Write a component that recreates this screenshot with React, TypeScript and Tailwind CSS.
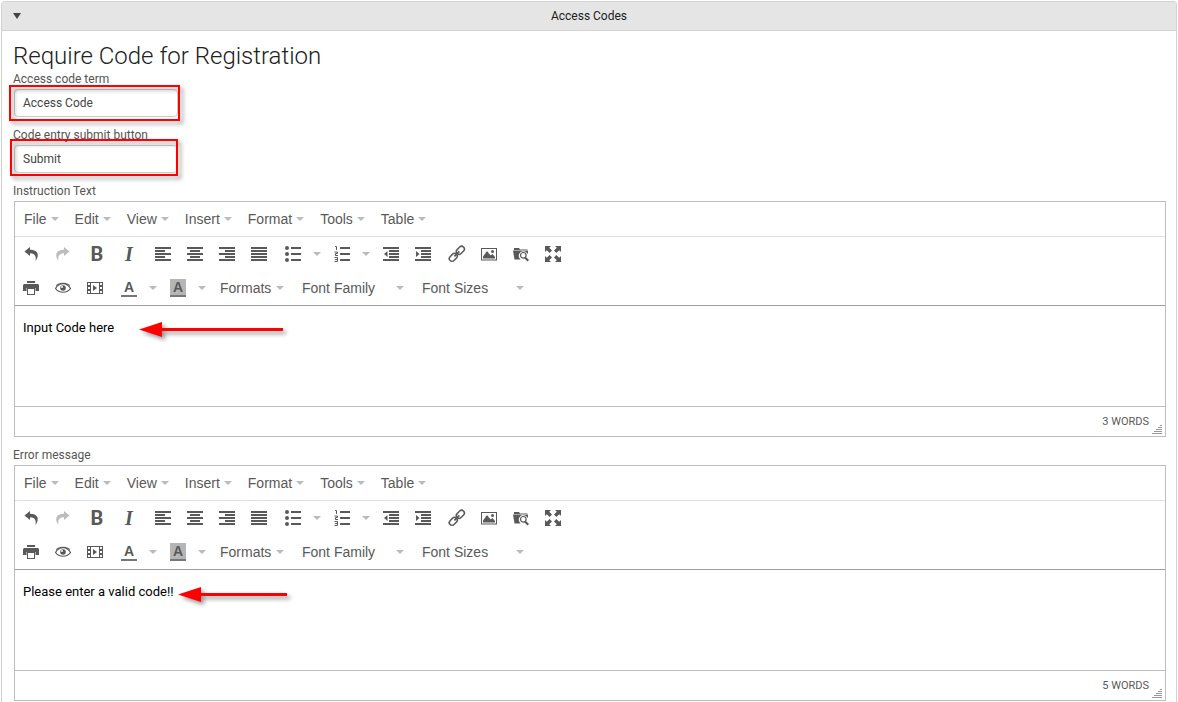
import type React from 'react';

const MENUS = ['File', 'Edit', 'View', 'Insert', 'Format', 'Tools', 'Table'];

export default function App() {
  return (
    <main className="mx-px mt-px rounded-t-sm border border-b-0 border-[#d3d3d3] bg-white font-['Roboto',sans-serif] text-xs">
      <header className="grid h-[29px] grid-cols-[1fr_auto_1fr] items-center border-b border-[#d3d3d3] bg-[#e5e5e5] text-[#212121]">
        <button type="button" aria-label="Collapse" className="ml-[11px] w-2">
          <svg viewBox="0 0 8 6" className="h-1.5 w-2" fill="#444">
            <path d="M0 0h8L4 6z" />
          </svg>
        </button>
        <h1>Access Codes</h1>
      </header>

      <form className="pt-2.5 pr-2.5 pb-px pl-[11px]">
        <h2 className="text-2xl leading-[30px] font-light text-[#212121]">Require Code for Registration</h2>
        <TextField id="term" label="Access code term" value="Access Code">
          <span className="pointer-events-none absolute -top-1 -left-[5px] h-9 w-[171px] border-2 border-[#f00] drop-shadow-[3px_3px_2px_rgba(0,0,0,0.4)]" />
        </TextField>
        <TextField id="submit" label="Code entry submit button" value="Submit">
          <span className="pointer-events-none absolute -top-1.5 -left-1 h-[37px] w-[168px] border-2 border-[#f00] drop-shadow-[3px_3px_2px_rgba(0,0,0,0.4)]" />
        </TextField>
        <EditorField id="instruction" label="Instruction Text" value="Input Code here" words={3}>
          <Arrow className="absolute top-4 left-[124px]" length={144} />
        </EditorField>
        <EditorField id="error" label="Error message" value="Please enter a valid code!!" words={5}>
          <Arrow className="absolute top-[17px] left-[163px]" length={109} />
        </EditorField>
      </form>
    </main>
  );
}

type FieldProps = { id: string; label: string; value: string; children?: React.ReactNode };

function TextField({ id, label, value, children }: FieldProps) {
  return (
    <div className="mb-2.5">
      <label htmlFor={id} className="mb-0.5 block leading-4 text-[#555]">{label}</label>
      <div className="relative ml-px w-[164px]">
        <input
          id={id}
          type="text"
          defaultValue={value}
          className="block h-7 w-full rounded-sm border border-[#ccc] bg-white px-2 text-xs text-[#444] outline-none"
        />
        {children}
      </div>
    </div>
  );
}

function EditorField({ id, label, value, words, children }: FieldProps & { words: number }) {
  return (
    <div className="mb-2.5 last:mb-0">
      <label htmlFor={id} className="mb-0.5 block leading-4 text-[#555]">{label}</label>
      <div className="ml-px border border-[#bdbdbd] font-['Liberation_Sans',Arial,sans-serif] text-sm text-[#595959]">
        <div className="flex h-[35px] items-center border-b border-[#dfe0e4] pl-px">
          {MENUS.map((name) => (
            <button key={name} type="button" className="flex items-center gap-1 px-2">
              {name}
              <Caret />
            </button>
          ))}
        </div>
        <div className="border-b border-[#9e9e9e]">
          <div className="flex h-[34px] gap-0.5">
            <Group>
              <Tool label="Undo"><Icon><path d="M7 1 1.500 5.500 7 10V7.300c4.500 0 6.500 2.700 5.500 7.700C16.500 9.500 15.500 3.700 7 3.700z" /></Icon></Tool>
              <Tool label="Redo" disabled><Icon><path d="m9 1 5.500 4.500L9 10V7.300c-4.500 0-6.500 2.700-5.500 7.700C-.5 9.500.5 3.700 9 3.700z" /></Icon></Tool>
            </Group>
            <Group>
              <Tool label="Bold"><span className="font-['Roboto',sans-serif] text-xl leading-4 font-bold">B</span></Tool>
              <Tool label="Italic"><span className="font-['Liberation_Serif',serif] text-xl leading-4 font-bold italic">I</span></Tool>
            </Group>
            <Group>
              <Tool label="Align left"><Icon><path d="M0 1h16v2H0zm0 3h10v2H0zm0 3h16v2H0zm0 3h10v2H0zm0 3h16v2H0z" /></Icon></Tool>
              <Tool label="Align center"><Icon><path d="M0 1h16v2H0zm3 3h10v2H3zM0 7h16v2H0zm3 3h10v2H3zm-3 3h16v2H0z" /></Icon></Tool>
              <Tool label="Align right"><Icon><path d="M0 1h16v2H0zm6 3h10v2H6zM0 7h16v2H0zm6 3h10v2H6zm-6 3h16v2H0z" /></Icon></Tool>
              <Tool label="Justify"><Icon><path d="M0 1h16v2H0zm0 3h16v2H0zm0 3h16v2H0zm0 3h16v2H0zm0 3h16v2H0z" /></Icon></Tool>
            </Group>
            <Group>
              <Tool label="Bullet list">
                <Icon>
                  <circle cx="2" cy="2" r="2" /><circle cx="2" cy="8" r="2" /><circle cx="2" cy="14" r="2" />
                  <path d="M6 1h10v2H6zm0 6h10v2H6zm0 6h10v2H6z" />
                </Icon>
              </Tool>
              <CaretButton label="Bullet styles" />
            </Group>
            <Group>
              <Tool label="Numbered list">
                <Icon>
                  <path d="M6 1h10v2H6zm0 6h10v2H6zm0 6h10v2H6z" />
                  <path d="M1 .5h1.500V4M.5 6h3v1.500h-2V9.500H4M.5 11.500h3v4h-3m.5-2h2.500" fill="none" stroke="currentColor" />
                </Icon>
              </Tool>
              <CaretButton label="Number styles" />
            </Group>
            <Group>
              <Tool label="Decrease indent"><Icon><path d="M0 1h16v2H0zm6 3h10v2H6zm0 3h10v2H6zm0 3h10v2H6zm-6 3h16v2H0zM4.500 5v6L1 8z" /></Icon></Tool>
              <Tool label="Increase indent"><Icon><path d="M0 1h16v2H0zm6 3h10v2H6zm0 3h10v2H6zm0 3h10v2H6zm-6 3h16v2H0zM1 5v6l3.500-3z" /></Icon></Tool>
            </Group>
            <Group>
              <Tool label="Link">
                <Icon>
                  <g fill="none" stroke="currentColor" strokeWidth="1.500" transform="rotate(-45 8 8)">
                    <rect x="-1.500" y="5" width="9" height="5.500" rx="2.700" />
                    <rect x="8.500" y="5" width="9" height="5.500" rx="2.700" />
                    <path d="M4.500 7.800h7" strokeWidth="1.800" />
                  </g>
                </Icon>
              </Tool>
              <Tool label="Image">
                <Icon>
                  <path d="M0 2h16v12.500H0zm1 1v10.500h14V3z" fillRule="evenodd" />
                  <path d="M2 12.500V10.500l4-5.500 3.500 4.500L11.500 8l2.500 3v1.500z" />
                  <circle cx="11.500" cy="5.500" r="1.500" />
                </Icon>
              </Tool>
              <Tool label="Browse files">
                <Icon>
                  <path d="M0 4.500h15V8l-1.500-1.500A4.500 4.500 0 0 0 7 12.800l.4.700H1.500zM1 2h5l1 1.500h7.500V4H1z" />
                  <circle cx="10.300" cy="9.300" r="2.800" fill="none" stroke="currentColor" strokeWidth="1.200" />
                  <path d="m12 11.500 3.300 3.300" stroke="currentColor" strokeWidth="2" />
                </Icon>
              </Tool>
              <Tool label="Fullscreen">
                <Icon>
                  <path d="M0 0h6L4.200 1.800 7 4.600 4.600 7 1.800 4.200 0 6zm16 0h-6l1.800 1.800L9 4.600 11.400 7l2.800-2.800L16 6zM0 16h6l-1.800-1.800L7 11.400 4.600 9l-2.800 2.800L0 10zm16 0h-6l1.800-1.800L9 11.400 11.400 9l2.800 2.800L16 10z" />
                </Icon>
              </Tool>
            </Group>
          </div>
          <div className="flex h-[34px] gap-0.5">
            <Group>
              <Tool label="Print">
                <Icon>
                  <path d="M4 1h8v2H4zM1 4h14l1 1v6h-3.500V8h-9v3H0V5z" />
                  <path d="M4 8h8v7H4zm1 1v5h6V9z" fillRule="evenodd" />
                </Icon>
              </Tool>
              <Tool label="Preview">
                <Icon>
                  <path d="M.5 8.500C4 2 12 2 15.500 8.500 12 13.500 4 13.500.5 8.500z" fill="none" stroke="currentColor" strokeWidth="1.200" />
                  <path d="M1 5.500c4-3 10-3 14 0" fill="none" stroke="currentColor" />
                  <circle cx="8" cy="8" r="2.800" />
                  <circle cx="7" cy="7" r="1" fill="#fff" />
                </Icon>
              </Tool>
              <Tool label="Media">
                <Icon>
                  <path d="M0 2h16v12H0zm4 1v10h8V3zM1 3v2h2V3zm0 4v2h2V7zm0 4v2h2v-2zm12-8v2h2V3zm0 4v2h2V7zm0 4v2h2v-2z" fillRule="evenodd" />
                  <path d="M6 5v6l4-3z" />
                </Icon>
              </Tool>
            </Group>
            <Group>
              <Tool label="Text color">
                <span className="h-[18px] w-4 border-b-2 border-[#777] font-bold leading-4">A</span>
              </Tool>
              <CaretButton label="Text color list" />
            </Group>
            <Group>
              <Tool label="Background color">
                <span className="h-[18px] w-4 border-b-2 border-[#777] bg-[#b5b5b5] font-bold leading-4">A</span>
              </Tool>
              <CaretButton label="Background color list" />
            </Group>
            <ListBox label="Formats" className="w-20" />
            <ListBox label="Font Family" className="w-[118px]" />
            <ListBox label="Font Sizes" className="w-[118px]" />
          </div>
        </div>
        <div className="relative">
          <textarea
            id={id}
            defaultValue={value}
            className="block h-[100px] w-full resize-none px-2 py-3 font-['Roboto',sans-serif] text-[13px] leading-5 text-black outline-none"
          />
          {children}
        </div>
        <div className="flex h-[30px] items-center justify-end gap-[3px] border-t border-[#bdbdbd] pr-[3px] font-['Roboto',sans-serif] text-[11px]">
          <span>{words} WORDS</span>
          <svg viewBox="0 0 10 9" className="mb-0.5 h-[9px] w-2.5 self-end" fill="#999">
            <path d="M8 0h2v1H8zM6 2h4v1H6zM4 4h6v1H4zM2 6h8v1H2zM0 8h10v1H0z" />
          </svg>
        </div>
      </div>
    </div>
  );
}

function Group({ children }: { children: React.ReactNode }) {
  return <div className="flex">{children}</div>;
}

function Tool({ label, disabled, children }: { label: string; disabled?: boolean; children: React.ReactNode }) {
  return (
    <button type="button" aria-label={label} disabled={disabled} className="flex w-8 items-center justify-center disabled:opacity-40">
      {children}
    </button>
  );
}

function Icon({ children }: { children: React.ReactNode }) {
  return <svg viewBox="0 0 16 16" className="size-4 overflow-visible" fill="currentColor">{children}</svg>;
}

function Caret() {
  return (
    <svg viewBox="0 0 8 4" className="h-1 w-2" fill="#b5bcc2">
      <path d="M0 0h8L4 4z" />
    </svg>
  );
}

function CaretButton({ label }: { label: string }) {
  return (
    <button type="button" aria-label={label} className="flex w-[15px] items-center pl-1">
      <Caret />
    </button>
  );
}

function ListBox({ label, className }: { label: string; className: string }) {
  return (
    <div className={`relative flex items-center ${className}`}>
      <select aria-label={label} className="w-full appearance-none bg-transparent pl-[9px] outline-none">
        <option>{label}</option>
      </select>
      <span className="pointer-events-none absolute right-[7px]"><Caret /></span>
    </div>
  );
}

function Arrow({ length, className }: { length: number; className: string }) {
  return (
    <svg
      width={length}
      height="15"
      fill="#f00"
      className={`pointer-events-none overflow-visible drop-shadow-[3px_3px_2px_rgba(0,0,0,0.4)] ${className}`}
    >
      <path d={`M0 7.500 23 0v6h${length - 23}v3H23v6z`} />
    </svg>
  );
}
